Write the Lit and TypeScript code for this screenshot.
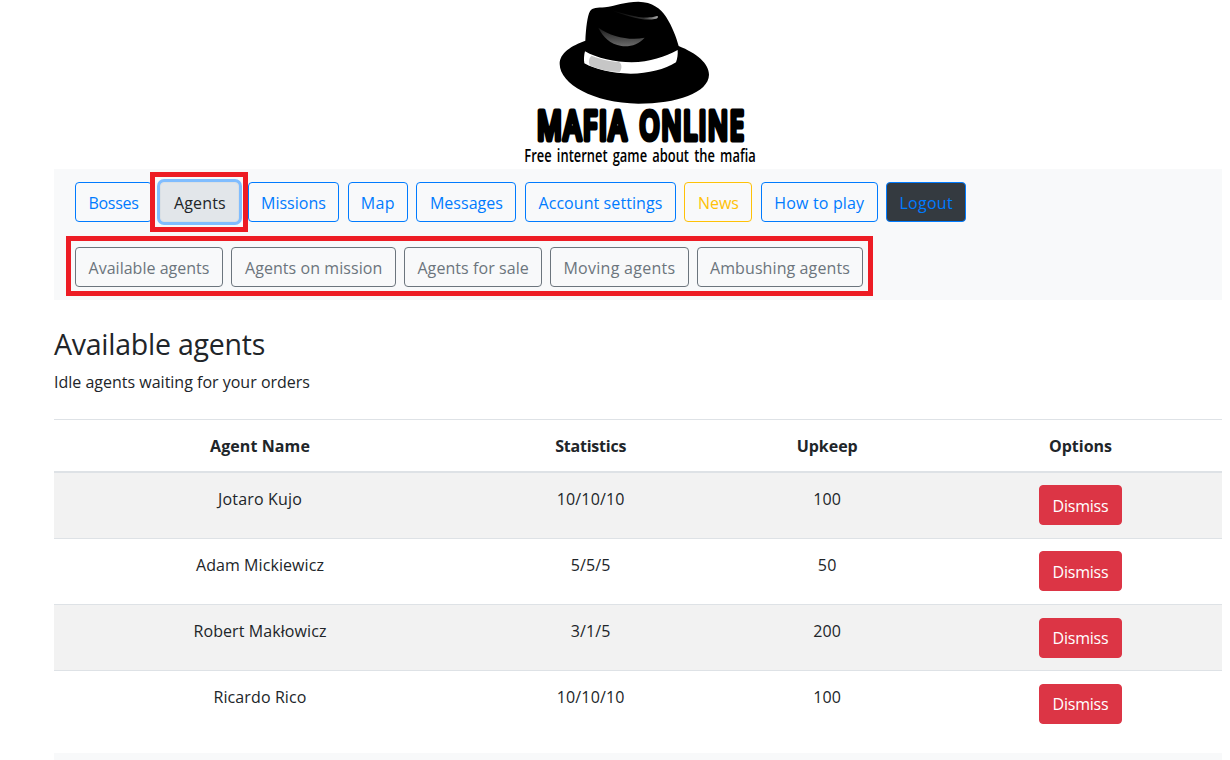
import { LitElement, html, css, svg } from "lit";
import { customElement, property } from "lit/decorators.js";

/** Text label whose tracking is adjusted so that it fills a given advance width. */
@customElement("fit-label")
class FitLabel extends LitElement {
  @property() text = "";
  @property({ type: Number }) span = 0;
  static styles = css`
    :host { display: inline-block; white-space: nowrap; }
    .t { display: inline-block; white-space: pre; }
  `;
  render() {
    return html`<span class="t">${this.text}</span>`;
  }
  async updated() {
    const el = this.renderRoot.querySelector(".t") as HTMLElement;
    const fit = () => {
      el.style.letterSpacing = "0px";
      const w = el.getBoundingClientRect().width;
      const gap = (this.span - w) / this.text.length;
      el.style.letterSpacing = gap.toFixed(3) + "px";
    };
    fit();
    await document.fonts.ready;
    fit();
  }
}

@customElement("mafia-logo")
class MafiaLogo extends LitElement {
  static styles = css`
    :host { display: block; width: 260px; height: 169px; }
    svg { display: block; overflow: visible; }
    .title { font: 600 119px "Open Sans", "Noto Sans", sans-serif; stroke: #000; stroke-width: 15; stroke-linejoin: round; stroke-linecap: round; letter-spacing: 6px; }
    .sub { font: 600 56px "Open Sans", "Noto Sans", sans-serif; word-spacing: 8px; }
  `;
  render() {
    return html`<svg width="260" height="169" viewBox="0 0 780 507">
      <defs>
        <linearGradient id="dent" x1="0" y1="0" x2="0" y2="1">
          <stop offset="0" stop-color="#181818" />
          <stop offset="1" stop-color="#6a6a6a" />
        </linearGradient>
        <linearGradient id="crease" x1="0" y1="0" x2="1" y2="0">
          <stop offset="0" stop-color="#000" />
          <stop offset="0.7" stop-color="#333" />
          <stop offset="1" stop-color="#aaa" />
        </linearGradient>
      </defs>
      ${svg`
      <path d="M226 122 C228 85 232 48 240 34 C247 22 262 24 285 22 C315 18 345 5 385 5 C428 6 452 26 468 50 C488 82 499 112 506 138 C560 160 597 190 597 224 C596 278 500 311 385 311 C250 309 150 252 149 192 C149 158 185 137 226 122 Z" fill="#000"/>
      <path d="M225 154 C260 174 315 187 365 187 C420 186 465 170 503 150 C504 163 502 176 498 187 C465 208 415 221 362 221 C305 220 255 208 223 190 C221 178 222 165 225 154 Z" fill="#fff"/>
      <path d="M245 167 C268 177 300 184 326 186 C336 189 337 206 329 216 C300 215 265 208 241 197 C234 190 236 173 245 167 Z" fill="#c6c6c6"/>
      <path d="M265 83 C305 112 362 122 404 113 C386 134 360 141 334 138 C300 132 280 112 265 83 Z" fill="url(#dent)"/>
      <path d="M302 29 C345 43 405 60 438 49 Q443 47 444 50 Q444 55 434 57 C398 64 345 47 302 29 Z" fill="url(#crease)"/>
      `}
      <text class="title" x="80" y="421" textLength="274" lengthAdjust="spacingAndGlyphs">MAFIA</text>
      <text class="title" x="388" y="421" textLength="318" lengthAdjust="spacingAndGlyphs">ONLINE</text>
      <text class="sub" x="43" y="487" textLength="694" lengthAdjust="spacingAndGlyphs">Free internet game about the mafia</text>
    </svg>`;
  }
}

type Item = { text: string; w: number; span: number; kind?: string };

const MENU: Item[] = [
  { text: "Bosses", w: 77, span: 50 },
  { text: "Agents", w: 79, span: 52, kind: "active" },
  { text: "Missions", w: 91.4, span: 65 },
  { text: "Map", w: 60.5, span: 34 },
  { text: "Messages", w: 100, span: 73 },
  { text: "Account settings", w: 151.2, span: 124 },
  { text: "News", w: 68, span: 41, kind: "news" },
  { text: "How to play", w: 117, span: 90 },
  { text: "Logout", w: 80, span: 53.5, kind: "logout" },
];
const SUBMENU: Item[] = [
  { text: "Available agents", w: 148, span: 121 },
  { text: "Agents on mission", w: 164.6, span: 137.5 },
  { text: "Agents for sale", w: 137.6, span: 111.5 },
  { text: "Moving agents", w: 138.2, span: 112 },
  { text: "Ambushing agents", w: 166, span: 140 },
];
const HEAD: [string, number][] = [["Agent Name", 100], ["Statistics", 71], ["Upkeep", 61], ["Options", 63]];
const ROWS: [string, number][][] = [
  [["Jotaro Kujo", 84], ["10/10/10", 68], ["100", 28]],
  [["Adam Mickiewicz", 128], ["5/5/5", 40], ["50", 19]],
  [["Robert Makłowicz", 133], ["3/1/5", 40], ["200", 28]],
  [["Ricardo Rico", 93], ["10/10/10", 68], ["100", 28]],
];

@customElement("app-root")
class AppRoot extends LitElement {
  static styles = css`
    :host {
      display: block; box-sizing: border-box; width: 1230px; height: 760px; overflow: hidden;
      padding: 0 8px 0 54px; background: #fff; color: #212529;
      font: 400 16px/25px "Open Sans", "Noto Sans", sans-serif;
    }
    * { box-sizing: border-box; }
    .brand { height: 169px; padding-left: 456px; }
    .nav { height: 131px; background: #f8f9fa; padding: 13px 0 0 21px; }
    .menu { display: flex; gap: 8.4px; height: 40px; }
    .sub { margin-top: 25px; }
    .btn {
      display: flex; align-items: center; justify-content: center; flex: none;
      height: 40px; padding: 2px 0 0; border: 1px solid #007bff; border-radius: 4px;
      background: transparent; color: #007bff; font: inherit; line-height: 25px;
    }
    .active { background: #e2e6ea; border-color: #dae0e5; color: #212529; box-shadow: 0 0 0 3px #80bdff; }
    .news { border-color: #ffc107; color: #ffc107; }
    .logout { background: #343a40; }
    .gray { border-color: #6c757d; color: #6c757d; }
    .slot { position: relative; flex: none; }
    .mark { position: absolute; border: 5px solid #ed1c24; pointer-events: none; }
    .mark-tab { left: -10px; top: -10px; width: 98px; height: 60px; }
    .mark-sub { left: -9px; top: -11px; width: 807px; height: 60px; }
    .rel { position: relative; }
    h2 { margin: 26px 0 0; font-weight: 400; font-size: 28.5px; line-height: 36px; height: 36px; }
    .lead { margin: 8px 0 24px; height: 25px; }
    .row { display: grid; grid-template-columns: 412px 249.4px 223.6px 283px; text-align: center; }
    .cell { padding-top: 13.9px; }
    .head { height: 54px; border-top: 1px solid #dee2e6; border-bottom: 2px solid #dee2e6; font-weight: 700; }
    .body { height: 66.15px; border-bottom: 1px solid #dee2e6; }
    .body:nth-child(odd) { background: #f2f2f2; }
    .body:last-child { border-bottom: 0; height: 81.55px; }
    .opt { padding-top: 12.3px; display: flex; justify-content: center; }
    .danger { width: 83px; padding-top: 2.4px; background: #dc3545; border-color: #dc3545; color: #fff; }
    .footer { height: 20px; background: #f8f9fa; }
  `;

  private label(text: string, span: number) {
    return html`<fit-label .text=${text} .span=${span}></fit-label>`;
  }

  private button(i: Item, extra = "") {
    const b = html`<button class="btn ${i.kind ?? ""} ${extra}" style="width:${i.w}px">${this.label(i.text, i.span)}</button>`;
    return i.kind === "active"
      ? html`<div class="slot">${b}<div class="mark mark-tab"></div></div>`
      : b;
  }

  render() {
    return html`
      <div class="brand"><mafia-logo></mafia-logo></div>
      <div class="nav">
        <div class="menu">${MENU.map((i) => this.button(i))}</div>
        <div class="menu sub rel">
          ${SUBMENU.map((i) => this.button(i, "gray"))}
          <div class="mark mark-sub"></div>
        </div>
      </div>
      <h2>${this.label("Available agents", 211)}</h2>
      <div class="lead">${this.label("Idle agents waiting for your orders", 256)}</div>
      <div class="row head">${HEAD.map(([t, s]) => html`<div class="cell">${this.label(t, s)}</div>`)}</div>
      <div>
        ${ROWS.map((r) => html`<div class="row body">
          ${r.map(([t, s]) => html`<div class="cell">${this.label(t, s)}</div>`)}
          <div class="opt"><button class="btn danger">${this.label("Dismiss", 56)}</button></div>
        </div>`)}
      </div>
      <div class="footer"></div>
    `;
  }
}
